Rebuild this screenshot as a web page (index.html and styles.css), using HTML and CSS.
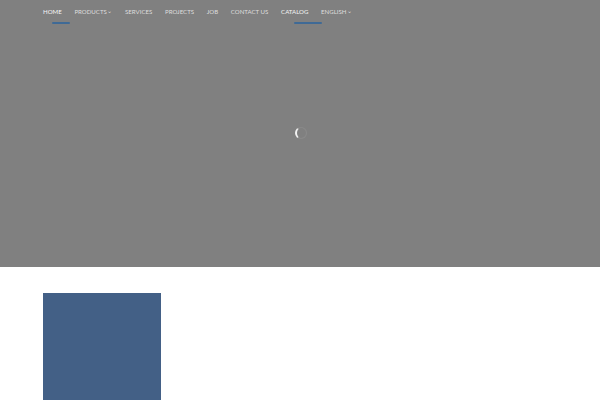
FILE: index.html
```html
<!DOCTYPE html>
<html>
<head>
<meta charset="utf-8">
<link rel="stylesheet" href="styles.css">
</head>
<body>
<header class="hero">
  <nav class="nav">
    <a class="item active home">Home</a>
    <a class="item">Products <span class="caret">&#8964;</span></a>
    <a class="item">Services</a>
    <a class="item">Projects</a>
    <a class="item">Job</a>
    <a class="item">Contact us</a>
    <a class="item bright active catalog">Catalog</a>
    <a class="item">English <span class="caret">&#8964;</span></a>
  </nav>
  <div class="loader"><div class="spinner"></div></div>
</header>
<main class="content">
  <div class="block"></div>
</main>
</body>
</html>
```
FILE: styles.css
```css
html, body { margin: 0; padding: 0; }
body { font-family: Lato, "Open Sans", sans-serif; background: #fff; width: 600px; height: 400px; overflow: hidden; }
.hero { background: #808080; height: 267px; display: flex; flex-direction: column; }
.nav { display: flex; gap: 12.7px; padding: 7px 0 0 43px; height: 18px; }
.item { position: relative; color: #dedede; font-size: 6.1px; text-transform: uppercase; line-height: 9px; text-decoration: none; white-space: nowrap; }
.item.home, .item.bright { color: #f6f6f6; }
.item.active::after { content: ""; position: absolute; top: 15px; height: 2px; background: #3f6a96; border-radius: 1px; }
.item.home::after { left: 9px; right: -8px; }
.item.catalog::after { left: 13px; right: -14px; }
.caret { font-size: 6px; position: relative; top: -1px; margin-left: -1px; }
.loader { flex: 1; display: flex; justify-content: center; padding-top: 102px; padding-left: 1px; }
.spinner { width: 12px; height: 12px; border-radius: 50%; border: 1px solid rgba(255,255,255,0.08); border-left: 2px solid #f2f2f2; box-sizing: border-box; }
.content { padding: 26px 0 0 43px; }
.block { width: 118px; height: 120px; background: #436086; }
```
